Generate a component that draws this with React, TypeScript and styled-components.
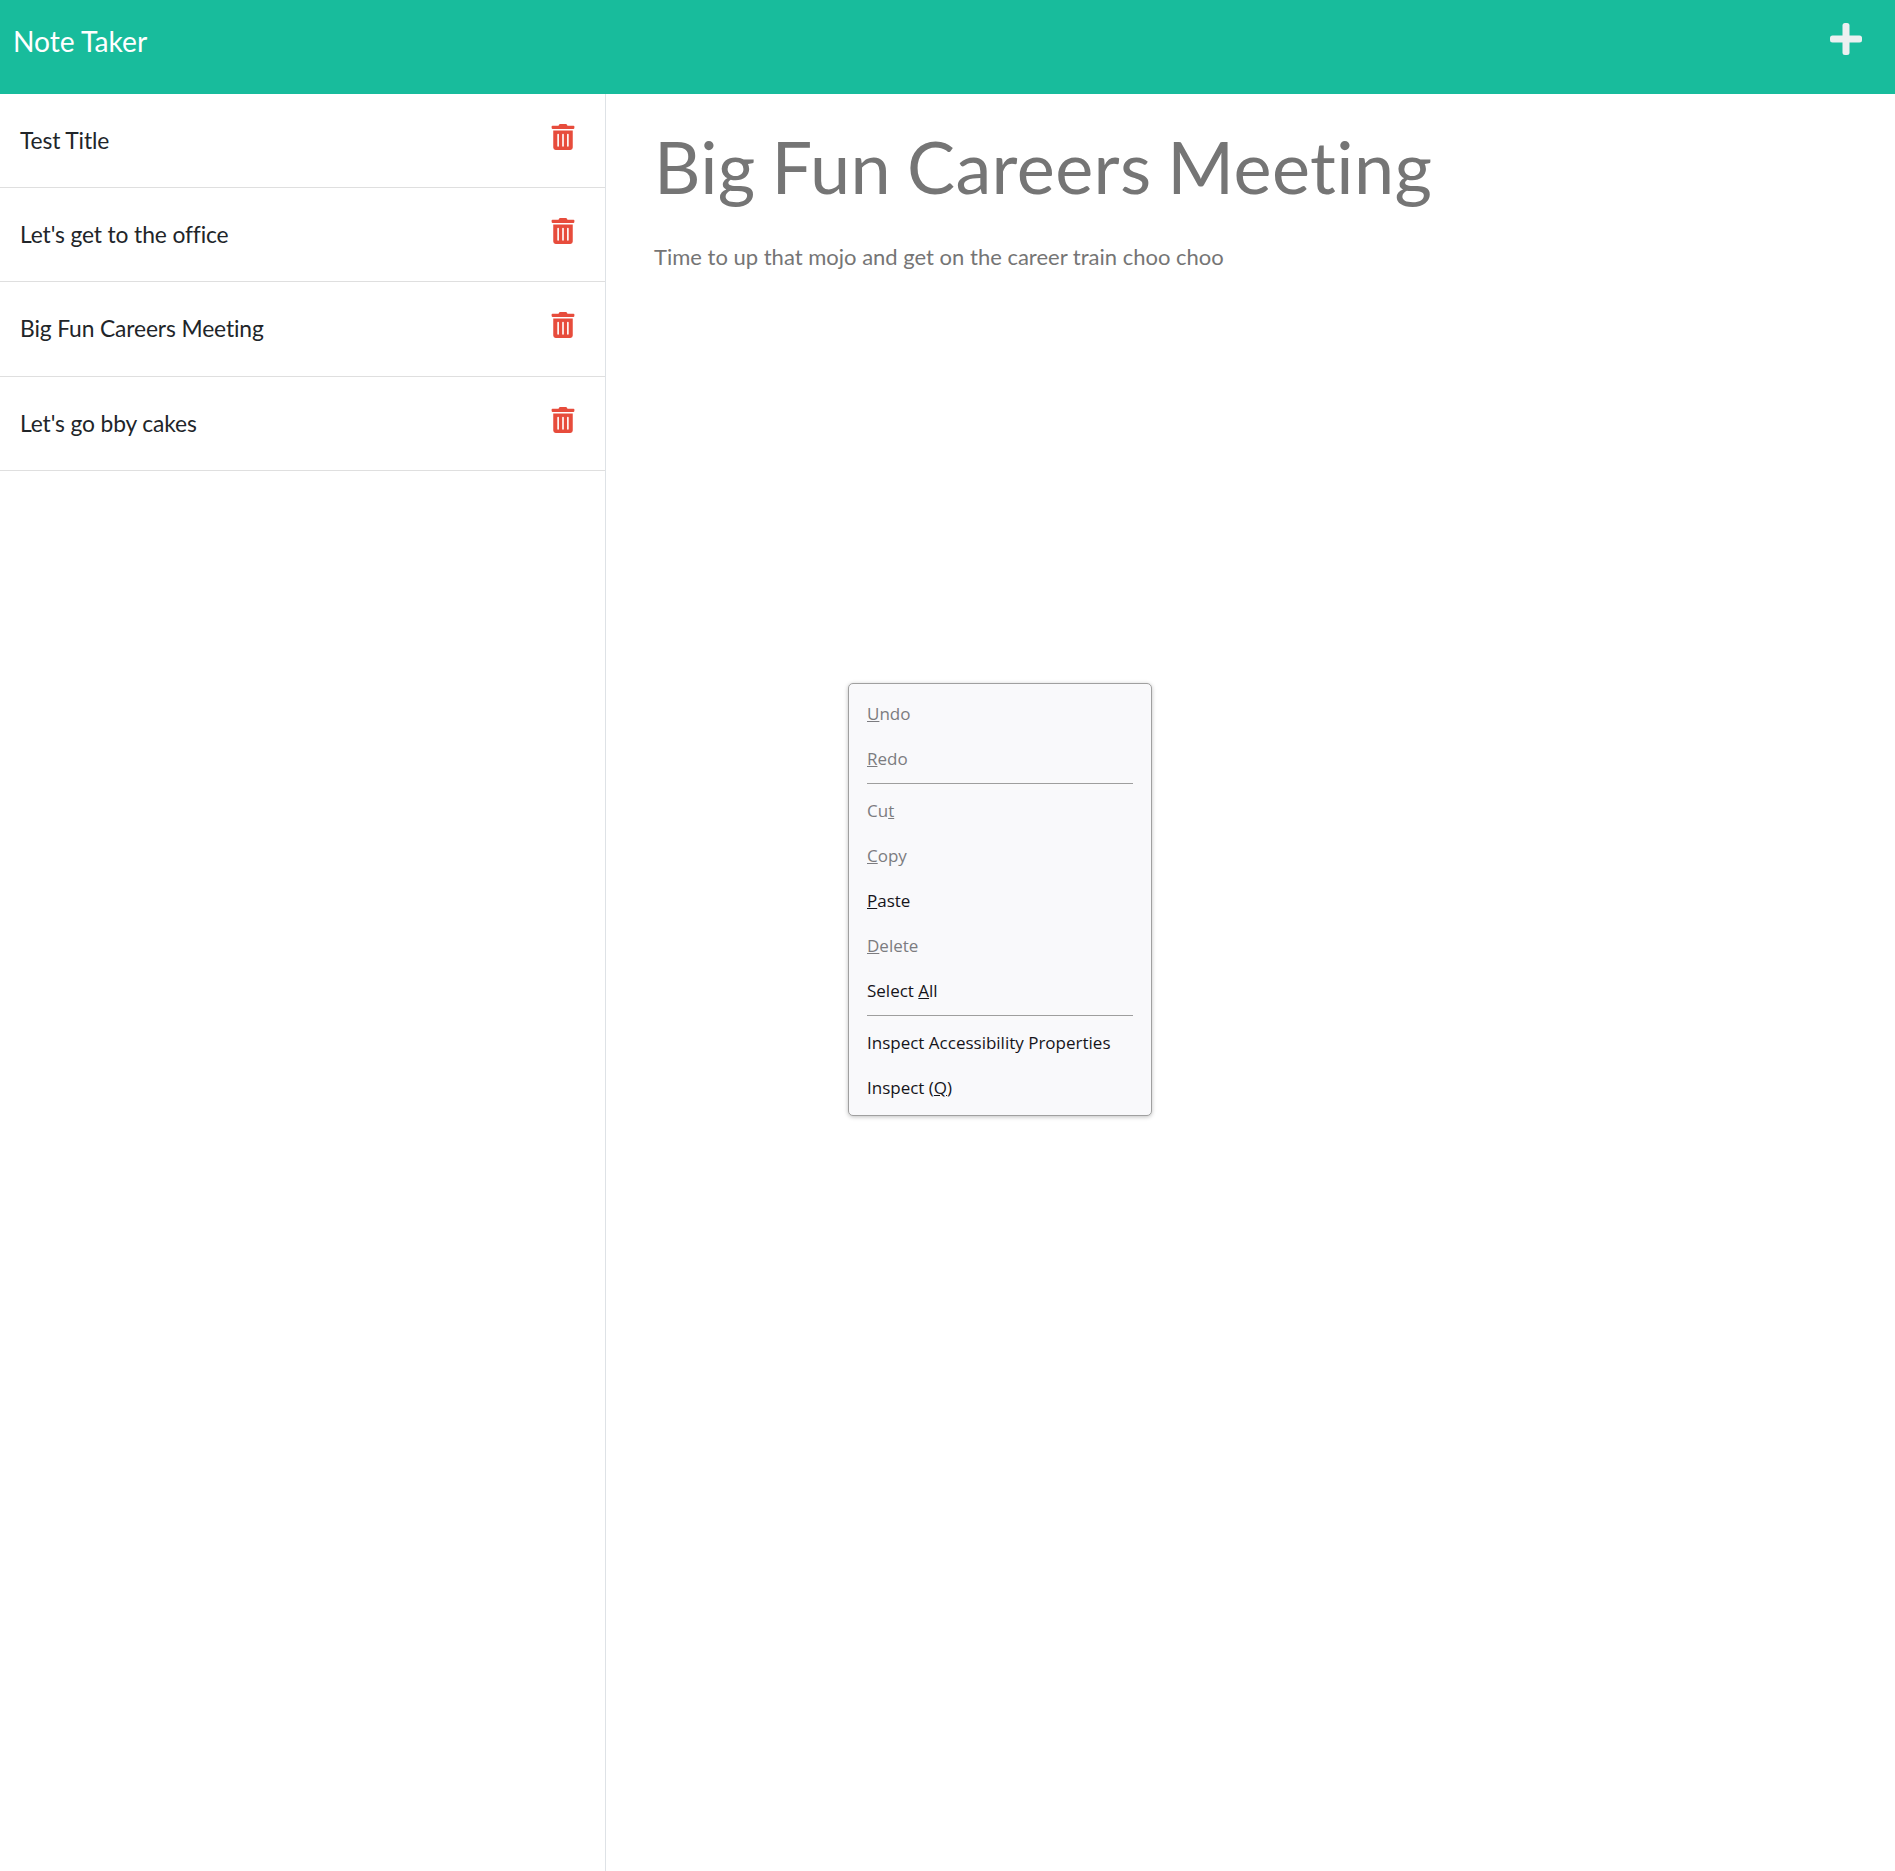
import styled, { createGlobalStyle } from 'styled-components';
import { FaTrashAlt } from 'react-icons/fa';

const GlobalStyle = createGlobalStyle`
  html, body {
    margin: 0;
    padding: 0;
    background: #fff;
  }
  body {
    font-family: Lato, "Liberation Sans", sans-serif;
    font-variant-ligatures: no-common-ligatures;
    color: #212529;
  }
`;

const Page = styled.div`
  position: relative;
  display: flex;
  flex-direction: column;
  height: 1871px;
  overflow: hidden;
`;

const Navbar = styled.nav`
  display: flex;
  align-items: flex-start;
  justify-content: space-between;
  box-sizing: border-box;
  height: 94px;
  padding: 22px 33px 0 13px;
  background: #18bc9c;
`;

const Brand = styled.a`
  font-size: 28.2px;
  line-height: 38px;
  color: #fff;
`;

const PlusButton = styled.button`
  display: block;
  width: 32px;
  height: 32px;
  margin-top: 1px;
  padding: 0;
  border: 0;
  background: none;
  color: #ecf0f1;
`;

const Body = styled.div`
  display: flex;
  flex: 1;
  min-height: 0;
`;

const Sidebar = styled.aside`
  box-sizing: border-box;
  width: 606px;
  flex: none;
  border-right: 1px solid #dee2e6;
`;

const NoteRow = styled.div`
  display: flex;
  align-items: flex-start;
  justify-content: space-between;
  box-sizing: border-box;
  height: 94.2px;
  padding: 30px 29px 0 20px;
  border-bottom: 1px solid #dfdfdf;
`;

const NoteName = styled.span`
  margin-top: 1px;
  font-size: 22.8px;
  line-height: 30px;
  letter-spacing: -0.12px;
`;

const TrashButton = styled.button`
  display: block;
  height: 26px;
  padding: 0;
  border: 0;
  background: none;
  color: #e74c3c;
  font-size: 26px;
  line-height: 0;
`;

const Main = styled.main`
  flex: 1;
  padding: 29px 48px;
  color: #757575;
`;

const Title = styled.h1`
  margin: 0;
  font-size: 72px;
  font-weight: 400;
  line-height: 86.4px;
  letter-spacing: 0.4px;
  word-spacing: -3px;
`;

const Text = styled.p`
  margin: 33px 0 0;
  font-size: 22px;
  line-height: 30px;
`;

const ContextMenu = styled.div`
  position: absolute;
  left: 848px;
  top: 683px;
  box-sizing: border-box;
  width: 304px;
  height: 433px;
  padding: 7px 0 0;
  border: 1px solid #a0a0a0;
  border-radius: 5px;
  background: #f9f9fb;
  box-shadow: 0 1px 4px rgba(0, 0, 0, 0.25);
  font-family: "Open Sans", "Noto Sans", sans-serif;
  font-size: 17px;
`;

const MenuItem = styled.div<{ $disabled?: boolean }>`
  height: 45px;
  padding-left: 18px;
  line-height: 45px;
  white-space: nowrap;
  color: ${({ $disabled }) => ($disabled ? '#7c7c80' : '#15141a')};
`;

const MenuDivider = styled.hr`
  height: 1px;
  margin: 2px 18px 4px;
  border: 0;
  background: #9e9e9e;
`;

const notes = ['Test Title', "Let's get to the office", 'Big Fun Careers Meeting', "Let's go bby cakes"];

function PlusIcon() {
  return (
    <svg width="32" height="32" viewBox="0 0 32 32" fill="currentColor">
      <rect x="12.500" y="0" width="7" height="32" rx="2.500" />
      <rect x="0" y="12.500" width="32" height="7" rx="2.500" />
    </svg>
  );
}

export default function App() {
  return (
    <>
      <GlobalStyle />
      <Page>
        <Navbar>
          <Brand>Note Taker</Brand>
          <PlusButton aria-label="New note">
            <PlusIcon />
          </PlusButton>
        </Navbar>
        <Body>
          <Sidebar>
            {notes.map((note) => (
              <NoteRow key={note}>
                <NoteName>{note}</NoteName>
                <TrashButton aria-label="Delete note">
                  <FaTrashAlt />
                </TrashButton>
              </NoteRow>
            ))}
          </Sidebar>
          <Main>
            <Title>Big Fun Careers Meeting</Title>
            <Text>Time to up that mojo and get on the career train choo choo</Text>
          </Main>
        </Body>
        <ContextMenu>
          <MenuItem $disabled><u>U</u>ndo</MenuItem>
          <MenuItem $disabled><u>R</u>edo</MenuItem>
          <MenuDivider />
          <MenuItem $disabled>Cu<u>t</u></MenuItem>
          <MenuItem $disabled><u>C</u>opy</MenuItem>
          <MenuItem><u>P</u>aste</MenuItem>
          <MenuItem $disabled><u>D</u>elete</MenuItem>
          <MenuItem>Select <u>A</u>ll</MenuItem>
          <MenuDivider />
          <MenuItem>Inspect Accessibility Properties</MenuItem>
          <MenuItem>Inspect (<u>Q</u>)</MenuItem>
        </ContextMenu>
      </Page>
    </>
  );
}
